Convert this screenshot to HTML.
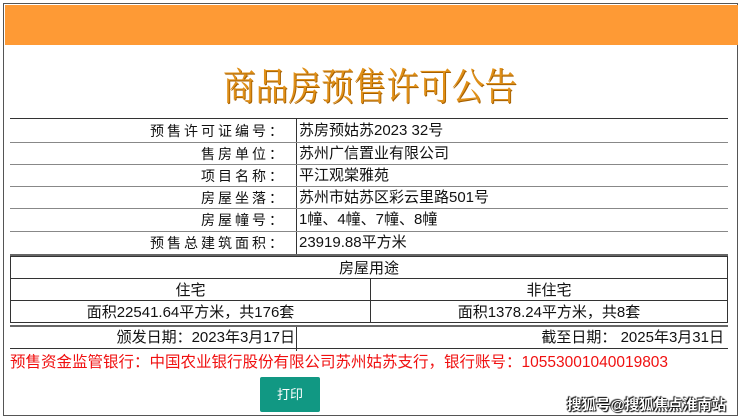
<!DOCTYPE html>
<html><head><meta charset="utf-8"><style>
*{margin:0;padding:0;box-sizing:border-box}
body{width:740px;height:419px;background:#fff;position:relative;overflow:hidden;font-family:"Liberation Sans","Noto Sans CJK SC",sans-serif;color:#111}
.frame{position:absolute;left:3px;top:3px;width:735px;height:413px;border:1px solid #555}
.orange{position:absolute;left:5px;top:5px;width:733px;height:40px;background:#fe9a35}
.title{position:absolute;left:0;width:740px;top:56px;text-align:center;font-family:"Noto Serif CJK SC",serif;font-size:38px;color:#e09018;text-shadow:1px 1px 0 #a55f00;transform:scaleX(0.86);transform-origin:370px 0}
.hl{position:absolute;left:10px;width:718px;height:1px;background:#333}
.row{position:absolute;left:10px;width:718px;height:22px;font-size:14px;line-height:22px}
.lab{position:absolute;right:442px;text-align:right;letter-spacing:3px}
.val{position:absolute;left:289px;font-size:15px}
.vl{position:absolute;width:1px;background:#333}
table{position:absolute;left:10px;top:256px;width:718px;border-collapse:collapse;font-size:15px}
td{border:1.5px solid #333;text-align:center;height:22px;padding:0}
.red{position:absolute;left:10px;top:350px;font-size:15.5px;color:#f01010;white-space:nowrap}
.btn{position:absolute;left:260px;top:377px;width:60px;height:35px;background:#119883;color:#fff;font-size:13px;text-align:center;line-height:35px;border-radius:2px}
.wm{position:absolute;left:567px;top:394px;font-size:14.5px;font-weight:bold;color:#fff;text-shadow:0 0 1px #000,1px 1px 1px #000,-1px -1px 1px #000;white-space:nowrap}
</style></head><body>
<div class="frame"></div>
<div class="orange"></div>
<div class="title">商品房预售许可公告</div>
<div class="hl" style="top:118px"></div>
<div class="vl" style="left:296px;top:119px;height:135px"></div>
<div class="row" style="top:120px"><span class="lab">预售许可证编号：</span><span class="val">苏房预姑苏2023 32号</span></div>
<div class="hl" style="top:142px;background:#888"></div>
<div class="row" style="top:143px"><span class="lab">售房单位：</span><span class="val">苏州广信置业有限公司</span></div>
<div class="hl" style="top:164px;background:#888"></div>
<div class="row" style="top:165px"><span class="lab">项目名称：</span><span class="val">平江观棠雅苑</span></div>
<div class="hl" style="top:186px;background:#888"></div>
<div class="row" style="top:187px"><span class="lab">房屋坐落：</span><span class="val">苏州市姑苏区彩云里路501号</span></div>
<div class="hl" style="top:208px;background:#888"></div>
<div class="row" style="top:209px"><span class="lab">房屋幢号：</span><span class="val">1幢、4幢、7幢、8幢</span></div>
<div class="hl" style="top:231px;background:#888"></div>
<div class="row" style="top:232px"><span class="lab">预售总建筑面积：</span><span class="val">23919.88平方米</span></div>
<div class="hl" style="top:254px;height:2px;background:#666"></div>
<table>
<tr><td colspan="2">房屋用途</td></tr>
<tr><td style="width:360px">住宅</td><td>非住宅</td></tr>
<tr><td>面积22541.64平方米，共176套</td><td>面积1378.24平方米，共8套</td></tr>
</table>
<div class="hl" style="top:325px;height:2px;background:#666"></div>
<div class="row" style="top:327px;font-size:15px"><span style="position:absolute;right:433px">颁发日期：2023年3月17日</span><span style="position:absolute;right:4px">截至日期： 2025年3月31日</span></div>
<div class="vl" style="left:296px;top:327px;height:24px"></div>
<div class="hl" style="top:348px"></div>
<div class="red">预售资金监管银行：中国农业银行股份有限公司苏州姑苏支行，银行账号：10553001040019803</div>
<div class="btn">打印</div>
<div class="wm">搜狐号@搜狐焦点淮南站</div>
</body></html>
